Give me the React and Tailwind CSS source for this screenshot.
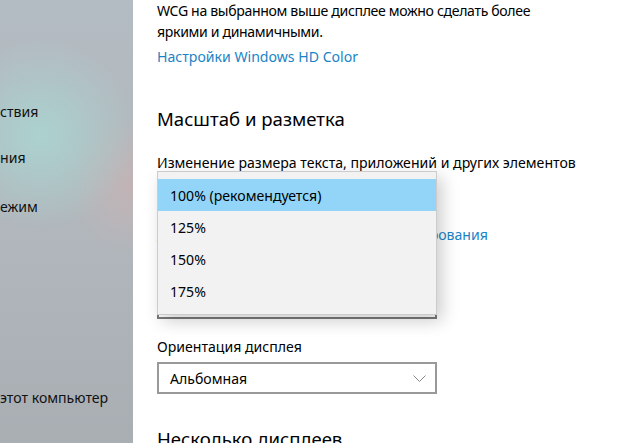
import React from "react";

const font = { fontFamily: '"Noto Sans", "Open Sans", sans-serif' };

function Combo({ value, border = "border-[#999999]", className = "" }) {
    return (
        <div className={`w-[280px] h-[32px] border-2 ${border} flex items-center justify-between pl-[11px] pr-[9px] ${className}`}>
            <span>{value}</span>
            <svg width="13" height="7" viewBox="0 0 13 7" className="text-[#8a8a8a]">
                <path d="M0.5 0.5l6 6 6-6" fill="none" stroke="currentColor" strokeWidth="1" />
            </svg>
        </div>
    );
}

export default function App() {
    const options = ["100% (рекомендуется)", "125%", "150%", "175%"];

    return (
        <div
            className="relative w-[640px] h-[443px] overflow-hidden flex bg-white text-black text-[14.1px] leading-[21px]"
            style={font}
        >
            {/* боковая панель */}
            <aside className="w-[133px] shrink-0 overflow-hidden whitespace-nowrap text-[#111] bg-[radial-gradient(circle_at_40px_135px,#abd2cf_0px,rgba(171,210,207,0)_95px),radial-gradient(circle_at_135px_185px,#c3b3b5_0px,rgba(195,179,181,0)_70px),linear-gradient(180deg,#b3bcc2_0%,#b1b7bc_50%,#a9aeb3_100%)]">
                <div className="mt-[102px] leading-[20px]">ствия</div>
                <div className="mt-[26px] leading-[20px]">ния</div>
                <div className="mt-[29px] leading-[20px]">ежим</div>
                <div className="mt-[171px] leading-[20px]">этот компьютер</div>
            </aside>

            {/* основное содержимое */}
            <main className="flex-1 pl-[24px]">
                <p className="w-[400px] tracking-[-0.35px]">
                    WCG на выбранном выше дисплее можно сделать более яркими и динамичными.
                </p>
                <a className="block mt-[4px] text-[#1a84c6]">Настройки Windows HD Color</a>

                <h2 className="mt-[38px] text-[18.6px] leading-[28px]">Масштаб и разметка</h2>

                <div className="mt-[19px]">Изменение размера текста, приложений и других элементов</div>
                <Combo value="100% (рекомендуется)" className="mt-[5px]" />
                <a className="block mt-[14px] text-[#1a84c6]">Дополнительные параметры масштабирования</a>

                <div className="mt-[14px]">Разрешение дисплея</div>
                <Combo value="1920 × 1080" border="border-[#7a7a7a]" className="mt-[7px]" />

                <div className="mt-[17px]">Ориентация дисплея</div>
                <Combo value="Альбомная" className="mt-[5px]" />

                <h2 className="mt-[31px] text-[18.6px] leading-[28px]">Несколько дисплеев</h2>
            </main>

            {/* открытый список масштаба */}
            <div className="absolute left-[157px] top-[171px] w-[280px] py-[7px] bg-[#f2f2f2] border border-[#cccccc] shadow-[5px_6px_16px_rgba(0,0,0,0.2)]">
                {options.map((o, i) => (
                    <div
                        key={o}
                        className={`h-[32px] flex items-center pl-[12px] ${i === 0 ? "bg-[#92d5f9]" : ""}`}
                    >
                        {o}
                    </div>
                ))}
            </div>
        </div>
    );
}
